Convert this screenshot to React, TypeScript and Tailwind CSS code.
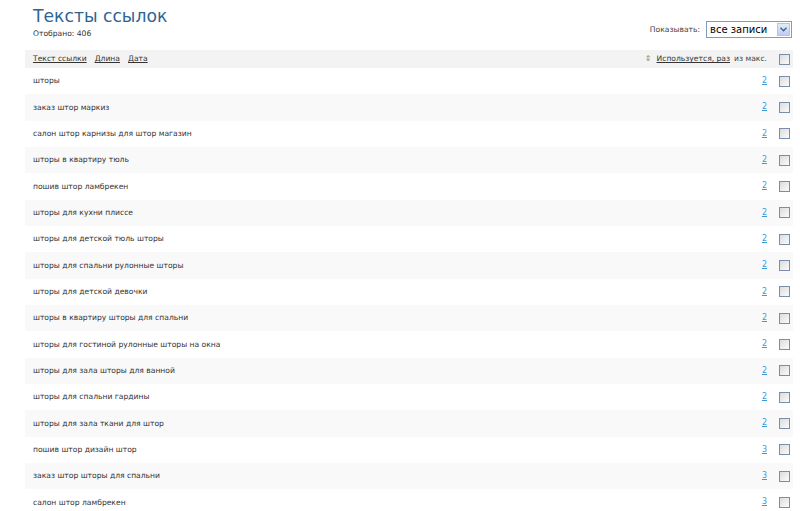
import React from "react";

const rows: [string, number][] = [
  ["шторы", 2],
  ["заказ штор маркиз", 2],
  ["салон штор карнизы для штор магазин", 2],
  ["шторы в квартиру тюль", 2],
  ["пошив штор ламбрекен", 2],
  ["шторы для кухни плиссе", 2],
  ["шторы для детской тюль шторы", 2],
  ["шторы для спальни рулонные шторы", 2],
  ["шторы для детской девочки", 2],
  ["шторы в квартиру шторы для спальни", 2],
  ["шторы для гостиной рулонные шторы на окна", 2],
  ["шторы для зала шторы для ванной", 2],
  ["шторы для спальни гардины", 2],
  ["шторы для зала ткани для штор", 2],
  ["пошив штор дизайн штор", 3],
  ["заказ штор шторы для спальни", 3],
  ["салон штор ламбрекен", 3],
];

function Box() {
  return (
    <span className="inline-block w-[11px] h-[11px] border border-[#7b8ea8] bg-gradient-to-br from-[#dcdcdc] to-[#fbfbfb]" />
  );
}

export default function App() {
  return (
    <div className="w-[800px] h-[511px] overflow-hidden bg-white text-[#333] [font-family:'DejaVu_Sans',Verdana,sans-serif]">
      <div className="flex justify-between items-end pl-[33px] pr-[8px] pt-[6px]">
        <div>
          <div className="text-[17.2px] leading-[20px] text-[#2d6595]">Тексты ссылок</div>
          <div className="text-[7.6px] leading-[10px] mt-[3px] text-[#333]">Отобрано: 406</div>
        </div>
        <div className="flex items-center gap-[6px] mb-[1px]">
          <span className="text-[7.6px] text-[#444]">Показывать:</span>
          <div className="flex items-center w-[86px] h-[17px] border border-[#7f9db9] bg-white">
            <span className="flex-1 text-[10px] leading-[15px] pl-[3px] text-black">все записи</span>
            <span className="w-[13px] h-[13px] mr-[1px] border border-[#b3c5e8] bg-gradient-to-b from-[#e4ecfb] to-[#bccdf2] flex items-center justify-center">
              <svg width="7" height="5" viewBox="0 0 7 5"><path d="M0.5 0.8 L3.5 3.8 L6.5 0.8" stroke="#4d6185" strokeWidth="1.4" fill="none" /></svg>
            </span>
          </div>
        </div>
      </div>
      <div className="ml-[25px] mr-[7px] mt-[11px]">
        <div className="flex items-center h-[18px] bg-[#f3f3f3] pl-[8px] pr-[3px] text-[7.6px]">
          <div className="flex gap-[8px] flex-1">
            <span className="underline">Текст ссылки</span>
            <span className="underline">Длина</span>
            <span className="underline">Дата</span>
          </div>
          <span className="text-[#888] text-[8px] mr-[5px]">⇕</span>
          <span className="underline">Используется, раз</span>
          <span className="ml-[4px] text-[#444]">из макс.</span>
          <span className="ml-[12px] flex"><Box /></span>
        </div>
        {rows.map(([t, n], i) => (
          <div key={i} className={`flex items-center h-[26.33px] pl-[8px] pr-[3px] text-[7.6px] ${i % 2 === 1 ? "bg-[#f9f9f9]" : "bg-white"}`}>
            <span className="flex-1">{t}</span>
            <span className="underline text-[#3b9ad9] text-[8px]">{n}</span>
            <span className="ml-[12px] flex"><Box /></span>
          </div>
        ))}
      </div>
    </div>
  );
}
